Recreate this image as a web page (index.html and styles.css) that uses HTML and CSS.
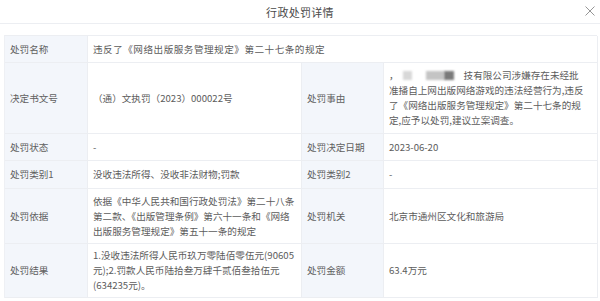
FILE: index.html
```html
<!DOCTYPE html>
<html lang="zh-CN">
<head>
<meta charset="utf-8">
<link rel="stylesheet" href="styles.css">
</head>
<body>
<div class="dialog">
  <div class="header">
    <span class="title">行政处罚详情</span>
    <svg class="close" viewBox="0 0 10 10" width="10" height="10"><path d="M0.5 0.5L9.5 9.5M9.5 0.5L0.5 9.5" stroke="#8a8a8a" stroke-width="0.9" fill="none"/></svg>
  </div>
  <div class="table">
    <div class="cell label">处罚名称</div>
    <div class="cell value span3 wide">违反了《网络出版服务管理规定》第二十七条的规定</div>

    <div class="cell label">决定书文号</div>
    <div class="cell value">（通）文执罚（2023）000022号</div>
    <div class="cell label">处罚事由</div>
    <div class="cell value"><div>，<span class="blur b1"></span><span class="blur b2"></span><span class="blur b3"></span>技有限公司涉嫌存在未经批<br>准播自上网出版网络游戏的违法经营行为,违反<br>了《网络出版服务管理规定》第二十七条的规<br>定,应予以处罚,建议立案调查。</div></div>

    <div class="cell label">处罚状态</div>
    <div class="cell value">-</div>
    <div class="cell label">处罚决定日期</div>
    <div class="cell value">2023-06-20</div>

    <div class="cell label">处罚类别1</div>
    <div class="cell value">没收违法所得、没收非法财物;罚款</div>
    <div class="cell label">处罚类别2</div>
    <div class="cell value">-</div>

    <div class="cell label">处罚依据</div>
    <div class="cell value"><div>依据《中华人民共和国行政处罚法》第二十八条<br>第二款、《出版管理条例》第六十一条和《网络<br>出版服务管理规定》第五十一条的规定</div></div>
    <div class="cell label">处罚机关</div>
    <div class="cell value">北京市通州区文化和旅游局</div>

    <div class="cell label">处罚结果</div>
    <div class="cell value"><div>1.没收违法所得人民币玖万零陆佰零伍元(90605<br>元);2.罚款人民币陆拾叁万肆千贰佰叁拾伍元<br>(634235元)。</div></div>
    <div class="cell label">处罚金额</div>
    <div class="cell value">63.4万元</div>
  </div>
</div>
</body>
</html>
```
FILE: styles.css
```css
html, body {
  margin: 0;
  padding: 0;
  background: #fff;
}
body {
  font-family: "Noto Sans CJK SC", "Noto Sans", sans-serif;
  width: 600px;
  height: 301px;
  overflow: hidden;
}
.dialog {
  display: flex;
  flex-direction: column;
}
.header {
  position: relative;
  height: 23px;
  border-bottom: 1px solid #eceef2;
  display: flex;
  align-items: center;
  justify-content: center;
}
.title {
  font-size: 11px;
  color: #4a4a4a;
  letter-spacing: 0.3px;
}
.close {
  position: absolute;
  right: 5px;
  top: 6px;
}
.table {
  margin: 11px 3px 0 4px;
  display: grid;
  grid-template-columns: 83px 214px 82px 214px;
  grid-template-rows: 27px 71px 27px 28px 55px 54px;
  border-top: 1px solid #eceef2;
  border-left: 1px solid #eef0f4;
}
.cell {
  display: flex;
  align-items: center;
  font-size: 9.6px;
  line-height: 15px;
  color: #5c5c5c;
  border-bottom: 1px solid #eceef2;
  border-right: 1px solid #eceef2;
  box-sizing: border-box;
  white-space: nowrap;
}
.label {
  background: #f3f6fb;
  padding-left: 5px;
  color: #606060;
}
.value {
  padding-left: 5px;
}
.wide {
  letter-spacing: 0.5px;
}
.span3 {
  grid-column: span 3;
}
.blur {
  display: inline-block;
  height: 9px;
  vertical-align: -1px;
  filter: blur(1px);
}
.b1 {
  width: 9px;
  margin-left: 4px;
  background: #d8d8d8;
}
.b2 {
  width: 18px;
  margin-left: 14px;
  background: #c4c4c4;
}
.b3 {
  width: 10px;
  margin-right: 10px;
  background: #7a7a7a;
}
```
